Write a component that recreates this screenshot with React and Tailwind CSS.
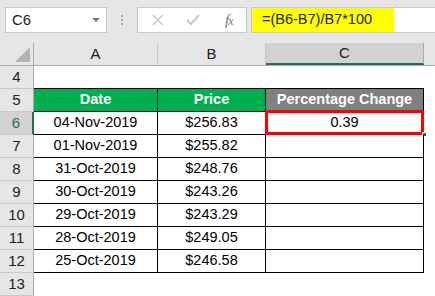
import React from "react";

const rows = [
  { n: 4 },
  { n: 5, head: true },
  { n: 6, date: "04-Nov-2019", price: "$256.83", pct: "0.39", selected: true },
  { n: 7, date: "01-Nov-2019", price: "$255.82" },
  { n: 8, date: "31-Oct-2019", price: "$248.76" },
  { n: 9, date: "30-Oct-2019", price: "$243.26" },
  { n: 10, date: "29-Oct-2019", price: "$243.29" },
  { n: 11, date: "28-Oct-2019", price: "$249.05" },
  { n: 12, date: "25-Oct-2019", price: "$246.58" },
  { n: 13 },
];

function Toolbar() {
  return (
    <div className="h-[43px] bg-[#e6e6e6] flex items-start pt-[7px] pl-[5px]">
      <div className="w-[102px] h-[26px] border border-[#c6c6c6] bg-white flex items-center justify-between pl-[6px] pr-[6px]">
        <span className="text-[15px] text-[#222]">C6</span>
        <span className="w-0 h-0 border-l-[4px] border-r-[4px] border-t-[4px] border-l-transparent border-r-transparent border-t-[#777]" />
      </div>
      <div className="w-[30px] h-[26px] flex flex-col items-center justify-center gap-[2px]">
        <span className="w-[2px] h-[2px] bg-[#aaa]" />
        <span className="w-[2px] h-[2px] bg-[#aaa]" />
        <span className="w-[2px] h-[2px] bg-[#aaa]" />
      </div>
      <div className="w-[110px] h-[26px] border border-[#c6c6c6] bg-white flex items-center">
        <svg width="14" height="14" viewBox="0 0 14 14" className="ml-[13px]">
          <path d="M2 2 L12 12 M12 2 L2 12" stroke="#c8c8c8" strokeWidth="1.5" fill="none" />
        </svg>
        <svg width="16" height="14" viewBox="0 0 16 14" className="ml-[20px]">
          <path d="M2 7 L6 11 L14 2" stroke="#c8c8c8" strokeWidth="2" fill="none" />
        </svg>
        <span className="ml-[24px] text-[15px] italic text-[#777] font-['Liberation_Serif',serif] tracking-[-1px]">
          f<span className="text-[12px]">x</span>
        </span>
      </div>
      <div className="w-[4px]" />
      <div className="flex-1 h-[26px] border border-[#c6c6c6] border-r-0 bg-white flex">
        <div className="w-[142px] h-full bg-[#ffff00] flex items-center pl-[10px] text-[14.5px] text-[#222]">
          =(B6-B7)/B7*100
        </div>
      </div>
    </div>
  );
}

function HeaderRow() {
  return (
    <div className="h-[23px] flex bg-[#e6e6e6] border-b border-[#ababab] text-[15px] text-[#222]">
      <div className="w-[34px] border-r border-[#ababab] flex items-end justify-end pr-[3px] pb-[3px]">
        <svg width="15" height="15" viewBox="0 0 15 15">
          <path d="M15 0 L15 15 L0 15 Z" fill="#b4b4b4" />
        </svg>
      </div>
      <div className="w-[124px] border-r border-[#c8c8c8] flex items-center justify-center">A</div>
      <div className="w-[108px] border-r border-[#c8c8c8] flex items-center justify-center">B</div>
      <div className="w-[158px] bg-[#d2d2d2] border-r border-[#ababab] border-b-2 border-b-[#217346] flex items-center justify-center">
        C
      </div>
      <div className="flex-1" />
    </div>
  );
}

function DataRow({ r }) {
  const inTable = r.n >= 5 && r.n <= 12;
  const bottom = r.n >= 4 && r.n <= 12 ? "border-b border-b-black" : "";
  const side = inTable ? "border-r border-r-black" : "";
  return (
    <div className="h-[23px] flex">
      <div
        className={
          r.selected
            ? "w-[34px] bg-[#d2d2d2] border-r-2 border-r-[#217346] border-b border-b-[#c8c8c8] flex items-center justify-center text-[15px] text-[#217346]"
            : "w-[34px] bg-[#e6e6e6] border-r border-r-[#ababab] border-b border-b-[#c8c8c8] flex items-center justify-center text-[15px] text-[#222]"
        }
      >
        {r.n}
      </div>
      {r.head ? (
        <>
          <div className={`w-[124px] bg-[#00b050] ${bottom} ${side} flex items-center justify-center text-white font-bold text-[14.5px]`}>
            Date
          </div>
          <div className={`w-[108px] bg-[#00b050] ${bottom} ${side} flex items-center justify-center text-white font-bold text-[14.5px]`}>
            Price
          </div>
          <div className={`w-[158px] bg-[#808080] ${bottom} ${side} flex items-center justify-center text-white font-bold text-[14.5px]`}>
            Percentage Change
          </div>
        </>
      ) : (
        <>
          <div className={`w-[124px] ${bottom} ${side} flex items-center justify-center text-[14.5px] text-black`}>
            {r.date}
          </div>
          <div className={`w-[108px] ${bottom} ${side} flex items-center justify-center text-[14.5px] text-black`}>
            {r.price}
          </div>
          <div className={`w-[158px] ${bottom} ${side} relative flex items-center justify-center text-[14.5px] text-black`}>
            {r.pct}
            {r.selected && (
              <>
                <span className="absolute left-[-1px] top-[-2px] right-[-1px] bottom-[-1px] border-[3px] border-[#ff0000]" />
                <span className="absolute right-[-4px] bottom-[-3px] w-[5px] h-[5px] bg-[#217346] border border-white" />
              </>
            )}
          </div>
        </>
      )}
      <div className="flex-1" />
    </div>
  );
}

export default function App() {
  return (
    <div className="w-[435px] h-[296px] bg-white overflow-hidden font-['Liberation_Sans',Arial,sans-serif]">
      <Toolbar />
      <HeaderRow />
      {rows.map((r) => (
        <DataRow key={r.n} r={r} />
      ))}
    </div>
  );
}
